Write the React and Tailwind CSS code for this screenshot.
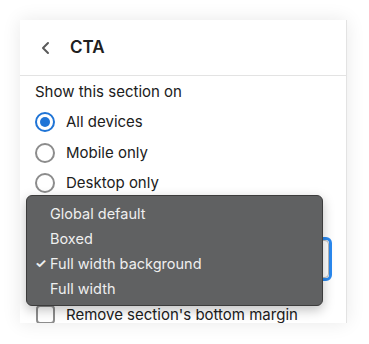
import React from "react";

const Radio = ({ checked, label }) => (
  <div className="flex items-center h-[30.5px]">
    {checked ? (
      <span className="w-[20px] h-[20px] rounded-full border-2 border-[#1f74d6] flex items-center justify-center">
        <span className="w-[10px] h-[10px] rounded-full bg-[#1f74d6]" />
      </span>
    ) : (
      <span className="w-[20px] h-[20px] rounded-full border-2 border-[#8c8c8c]" />
    )}
    <span className="ml-[11px] text-[15px] text-[#202020]">{label}</span>
  </div>
);

const options = ["Global default", "Boxed", "Full width background", "Full width"];

export default function App() {
  return (
    <div className="w-[369px] h-[344px] bg-white p-[20px]" style={{ fontFamily: "Inter, 'Noto Sans', sans-serif" }}>
      <div className="relative w-[327px] h-[303px] bg-white overflow-hidden border-r border-[#e3e3e3] shadow-[0_0_18px_rgba(0,0,0,0.09)]">
        <div className="h-[56px] flex items-center border-b border-[#e3e3e3]">
          <svg className="ml-[20px]" width="12" height="14" viewBox="0 0 12 14" fill="none">
            <path d="M8 2 L3 7 L8 12" stroke="#5a5a5a" strokeWidth="2" strokeLinecap="round" strokeLinejoin="round" />
          </svg>
          <span className="ml-[18px] text-[17px] font-semibold text-[#202020]">CTA</span>
        </div>
        <div className="px-[15px] pt-[5px]">
          <div className="text-[15px] text-[#202020] h-[22px] leading-[22px]">Show this section on</div>
          <div className="mt-[4px]">
            <Radio checked label="All devices" />
            <Radio label="Mobile only" />
            <Radio label="Desktop only" />
          </div>
          <div className="h-[38px]" />
          <div className="h-[44px] w-[297px] rounded-[6px] border-[3px] border-[#2b8af0] bg-white">
            <div className="h-full rounded-[4px] border border-[#b8b8b8]" />
          </div>
          <div className="mt-[23px] flex items-center">
            <span className="ml-[1px] w-[19px] h-[19px] rounded-[4px] border-2 border-[#8c8c8c]" />
            <span className="ml-[11px] text-[15px] text-[#202020]">Remove section's bottom margin</span>
          </div>
        </div>
        <div className="absolute left-[6px] top-[175px] w-[297px] h-[111px] rounded-[6px] bg-[#606162] border border-[#3c3c3c] shadow-[0_4px_12px_rgba(0,0,0,0.25)] pt-[5px]">
          {options.map((o, i) => (
            <div key={o} className="relative h-[25px] flex items-center pl-[23px] text-[14.5px] text-[#efefef]">
              {i === 2 && <span className="absolute left-[8px] text-[13px] font-bold">✓</span>}
              {o}
            </div>
          ))}
        </div>
      </div>
    </div>
  );
}
